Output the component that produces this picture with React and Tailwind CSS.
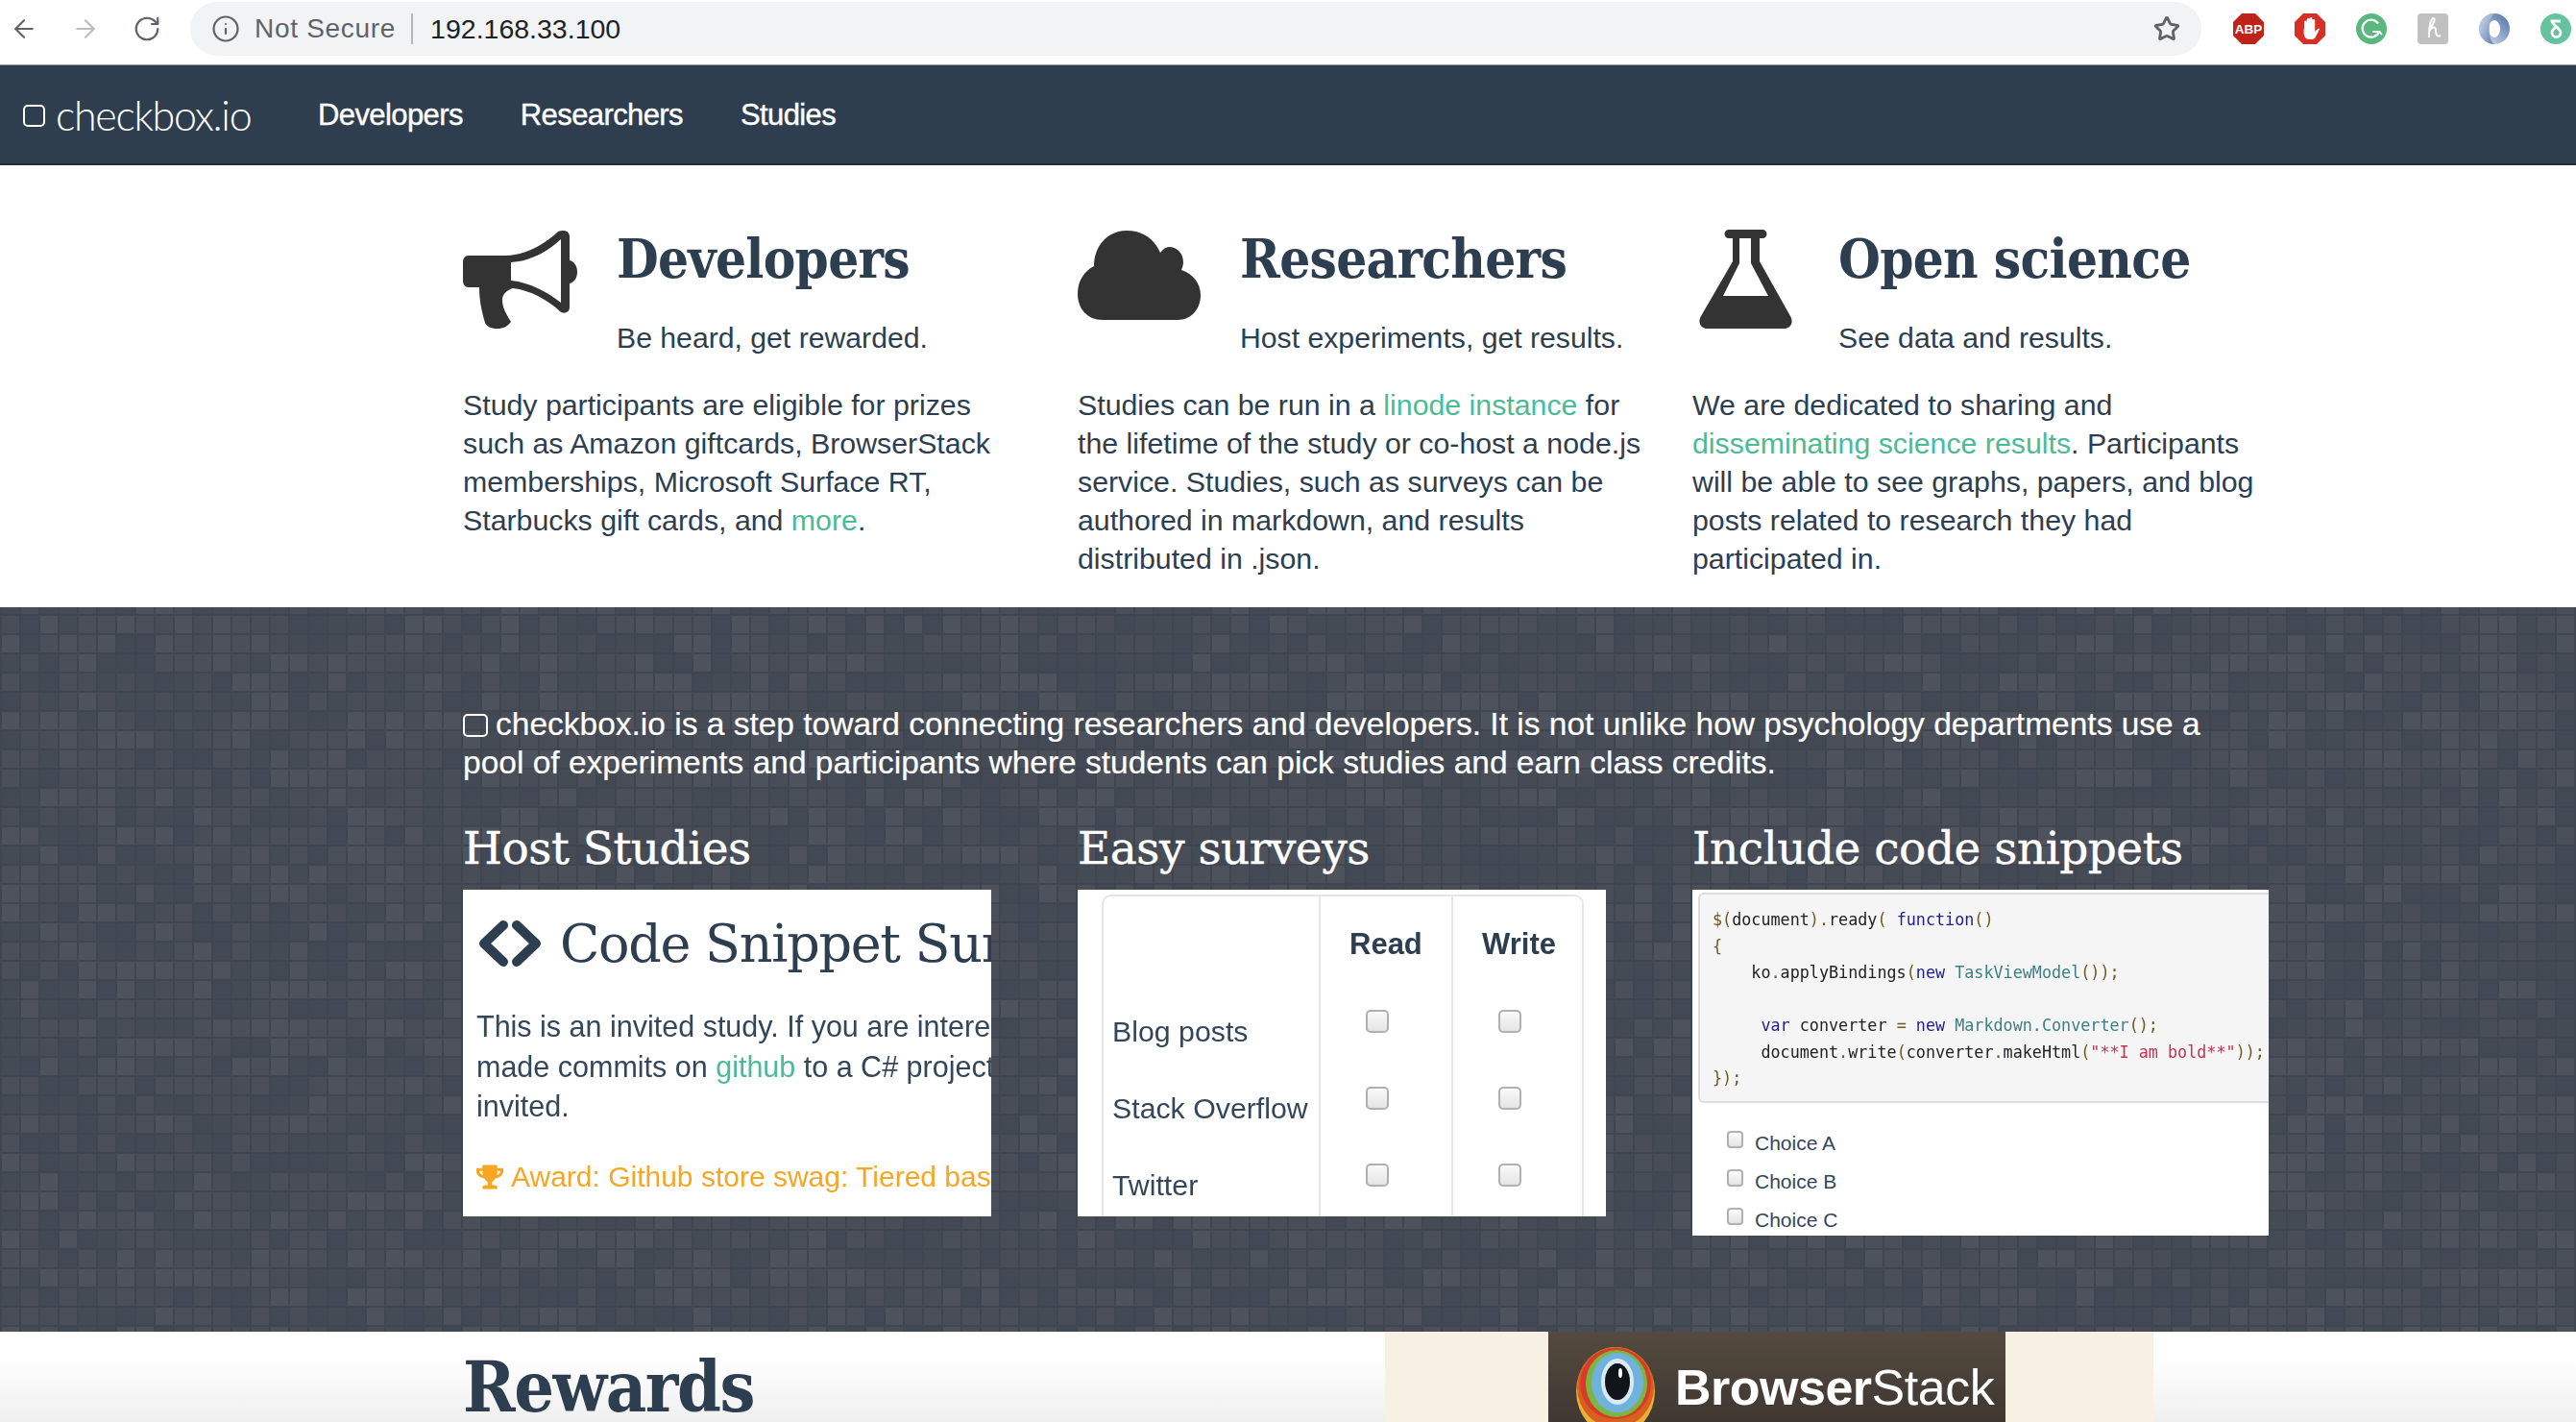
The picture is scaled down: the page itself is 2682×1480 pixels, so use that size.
import { ArrowLeft, ArrowRight, RotateCw, Info, Star } from 'lucide-react';
import { FaTrophy } from 'react-icons/fa';

const sans = "font-['Liberation_Sans',Arial,sans-serif]";
const slab = "font-['DejaVu_Serif',serif]";
const slabNarrow = "font-['DejaVu_Serif_Condensed','DejaVu_Serif',serif]";

// pseudo random tiles for the dark panel
const tiles = [];
let seed = 7;
const shades = ['#454b55', '#484d57', '#4a4f59', '#4d525c', '#434954'];
for (let y = 0; y < 40; y++) {
  for (let x = 0; x < 135; x++) {
    seed = (seed * 1103515245 + 12345) % 2147483648;
    tiles.push({ x: x * 20 + 2, y: y * 20 - 11, fill: shades[(seed >> 16) % 5] });
  }
}

function Texture() {
  return (
    <svg className="absolute inset-0 w-full h-full" aria-hidden="true">
      <rect width="100%" height="100%" fill="#404650" />
      {tiles.map((t, i) => (
        <rect key={i} x={t.x} y={t.y} width="18" height="18" fill={t.fill} />
      ))}
    </svg>
  );
}

function Megaphone() {
  return (
    <svg width="120" height="102" viewBox="0 0 120 102" fill="#333">
      <path
        fillRule="evenodd"
        d="M6 26H44C65 26 85 14 98 2C101 -1 111 -1 111 6V31C116 32 119 37 119 43C119 49 116 54 111 55V80C111 86 104 87 101 84C88 72 70 62 52 60C46 62 41 66 41 72C41 78 43 84 50 95C46 100 42 102 36 102C30 102 25 100 23 96C19 82 17 72 17 59H6C2 59 0 56 0 52V33C0 29 2 26 6 26ZM50 33V52C70 54 88 64 102 75V9C88 22 70 32 50 33Z"
      />
    </svg>
  );
}

function Cloud() {
  return (
    <svg width="128" height="93" viewBox="0 0 128 93" fill="#333">
      <path d="M26 93C10 93 0 81 0 66C0 52 7 42 17 37C17 15 32 0 51 0C68 0 80 9 86 23C89 19 92 17 95 17C104 17 110 24 110 33C110 36 109 38 108 41C120 45 128 55 128 67C128 82 118 93 104 93Z" />
    </svg>
  );
}

function Flask() {
  return (
    <svg width="97" height="103" viewBox="0 0 97 103" fill="#333">
      <path
        fillRule="evenodd"
        d="M31 0H66A4.5 4.5 0 0 1 66 9H63V33L95 90C99 97 95 103 88 103H9C2 103 -2 97 2 90L35 33V9H31A4.5 4.5 0 0 1 31 0ZM42 9V35L25 69H72L54 35V9Z"
      />
    </svg>
  );
}

function Extensions() {
  return (
    <div className="flex items-center gap-[32px] pl-[33px]">
      <svg width="32" height="32" viewBox="0 0 32 32">
        <polygon points="9,0 23,0 32,9 32,23 23,32 9,32 0,23 0,9" fill="#bd2318" />
        <text x="16" y="21" textAnchor="middle" fontSize="13.5" fontWeight="700" fill="#fff" fontFamily="Liberation Sans">ABP</text>
      </svg>
      <svg width="32" height="32" viewBox="0 0 32 32">
        <polygon points="9,0 23,0 32,9 32,23 23,32 9,32 0,23 0,9" fill="#d63024" />
        <path d="M10 15V9a1.4 1.4 0 0 1 2.8 0V6.5a1.4 1.4 0 0 1 2.8 0V5.500a1.400 1.400 0 0 1 2.800 0V7.500a1.400 1.400 0 0 1 2.800 0V19c2-2 3-3.500 4-3.500 1 .5.600 1.500 0 2.500-1.500 3-3 6-4 7.500-1 1-3 1.500-5 1.500-3.500 0-5.200-1-6-3.500-.8-2.500-.8-5.500 -.2-9z" fill="#fff" />
      </svg>
      <svg width="32" height="32" viewBox="0 0 32 32">
        <circle cx="16" cy="16" r="16" fill="#5ab77f" />
        <path d="M23 10.500A9 9 0 1 0 24 19H17" fill="none" stroke="#fff" strokeWidth="2.200" />
        <path d="M24 19l-2.500 4M24 19l3 3" fill="none" stroke="#fff" strokeWidth="1.800" />
      </svg>
      <div className="w-[32px] h-[32px] rounded-[4px] bg-[#c0c0c0] flex items-center justify-center">
        <svg width="20" height="26" viewBox="0 0 20 26" fill="none" stroke="#fff" strokeWidth="2">
          <path d="M6 22C6 14 6 8 9 3C10 1 13 2 11 6C9 10 7 13 6 16C8 11 13 10 13 14C13 17 13 22 18 20" />
        </svg>
      </div>
      <svg width="32" height="32" viewBox="0 0 32 32">
        <defs>
          <linearGradient id="ring" x1="0" y1="0" x2="1" y2="1">
            <stop offset="0" stopColor="#d5dff0" />
            <stop offset="1" stopColor="#5d7fb0" />
          </linearGradient>
          <linearGradient id="ring2" x1="1" y1="0" x2="0" y2="1">
            <stop offset="0" stopColor="#4a6fa8" />
            <stop offset="1" stopColor="#dfe6f2" />
          </linearGradient>
        </defs>
        <ellipse cx="16" cy="16" rx="16" ry="16" fill="url(#ring2)" />
        <ellipse cx="16" cy="16" rx="6" ry="9" fill="#fff" />
        <path d="M16 0A16 16 0 0 0 16 32C9 28 9 5 16 0Z" fill="url(#ring)" />
      </svg>
      <svg width="32" height="32" viewBox="0 0 32 32">
        <circle cx="16" cy="16" r="16" fill="#66c2a1" />
        <path d="M21 8H12C12 12 21 15 21 20A4.500 4.500 0 0 1 12 20C12 17 15 15 17 14" fill="none" stroke="#fff" strokeWidth="2.800" />
      </svg>
    </div>
  );
}

function BrowserBar() {
  return (
    <div className="h-[67px] bg-white flex items-start">
      <div className="w-[198px] h-[60px] flex items-center gap-[34px] pl-[10px] text-[#5f6368] shrink-0">
        <ArrowLeft size={30} strokeWidth={1.75} />
        <ArrowRight size={30} strokeWidth={1.75} className="text-[#bdbdbd]" />
        <RotateCw size={30} strokeWidth={1.75} />
      </div>
      <div className="mt-[2px] w-[2094px] h-[56px] rounded-full bg-[#f1f3f4] flex items-center pl-[22px] pr-[22px] shrink-0">
        <Info size={30} strokeWidth={1.75} className="text-[#5f6368]" />
        <span className={`${sans} ml-[15px] text-[28px] tracking-[0.7px] text-[#5f6368]`}>Not Secure</span>
        <span className="ml-[16px] w-[2px] h-[32px] bg-[#b5b7ba]" />
        <span className={`${sans} ml-[18px] text-[28.500px] text-[#202124]`}>192.168.33.100</span>
        <Star size={28} strokeWidth={2.5} className="ml-auto text-[#5f6368]" />
      </div>
      <div className="mt-[14px]"><Extensions /></div>
    </div>
  );
}

function NavBar() {
  const link = `${sans} text-[31px] tracking-[-0.6px] [-webkit-text-stroke:0.4px_white]`;
  return (
    <div className="h-[105px] pt-[2px] bg-[#2e3e4f] border-t border-[#9aa3ad] border-b-2 border-b-[#232f3c] flex items-center text-white">
      <span className="ml-[24px] w-[23px] h-[23px] rounded-[5px] border-2 border-white" />
      <span className="ml-[11px] font-['Lato',sans-serif] font-light text-[43px] tracking-[-1.3px] w-[273px]">checkbox.io</span>
      <a className={`${link} mr-[60px]`}>Developers</a>
      <a className={`${link} mr-[60px]`}>Researchers</a>
      <a className={link}>Studies</a>
    </div>
  );
}

function Feature({ icon, iconWidth, title, sub, children }) {
  return (
    <div className="w-[640px] shrink-0">
      <div className="flex items-start">
        <div className={iconWidth}>{icon}</div>
        <div>
          <h2 className={`${slabNarrow} h-[60px] leading-[60px] text-[56px] font-bold tracking-[-0.7px] text-[#2c3e50] whitespace-nowrap`}>{title}</h2>
          <p className="mt-[33px] h-[40px] leading-[40px] text-[30.200px] whitespace-nowrap">{sub}</p>
        </div>
      </div>
      <p className="mt-[30px] leading-[40px] text-[30.300px] whitespace-nowrap">{children}</p>
    </div>
  );
}

function Features() {
  return (
    <section className={`${sans} bg-white text-[#2c3e50] pt-[67px] pb-[30px] pl-[482px] flex`}>
      <Feature
        icon={<Megaphone />}
        iconWidth="w-[160px] pt-px"
        title="Developers"
        sub="Be heard, get rewarded."
      >
        Study participants are eligible for prizes<br />
        such as Amazon giftcards, BrowserStack<br />
        memberships, Microsoft Surface RT,<br />
        Starbucks gift cards, and <a className="text-[#4dba96]">more</a>.
      </Feature>
      <Feature
        icon={<Cloud />}
        iconWidth="w-[169px] pt-px"
        title="Researchers"
        sub="Host experiments, get results."
      >
        Studies can be run in a <a className="text-[#4dba96]">linode instance</a> for<br />
        the lifetime of the study or co-host a node.js<br />
        service. Studies, such as surveys can be<br />
        authored in markdown, and results<br />
        distributed in .json.
      </Feature>
      <Feature
        icon={<Flask />}
        iconWidth="w-[152px] pl-[7px]"
        title="Open science"
        sub="See data and results."
      >
        We are dedicated to sharing and<br />
        <a className="text-[#4dba96]">disseminating science results</a>. Participants<br />
        will be able to see graphs, papers, and blog<br />
        posts related to research they had<br />
        participated in.
      </Feature>
    </section>
  );
}

function StudyCard() {
  return (
    <div className={`${sans} w-[550px] h-[340px] bg-white overflow-hidden text-[#34465a] pl-[14px] whitespace-nowrap`}>
      <div className="blur-[0.5px]">
        <div className="flex items-center h-[58px] mt-[27px]">
          <svg width="70" height="50" viewBox="0 0 70 50" fill="none" stroke="#2c3e50" strokeWidth="10" strokeLinecap="round" strokeLinejoin="round" className="shrink-0">
            <polyline points="28,6 8,25 28,44" />
            <polyline points="42,6 62,25 42,44" />
          </svg>
          <span className={`${slab} ml-[17px] text-[54px] tracking-[-1.3px] text-[#2c3e50]`}>Code Snippet Sur</span>
        </div>
        <p className="mt-[37px] text-[30.500px] leading-[41.500px]">
          This is an invited study. If you are interested<br />
          made commits on <a className="text-[#4dba96]">github</a> to a C# project<br />
          invited.
        </p>
        <p className="mt-[32px] flex items-center text-[30px] leading-[40px] text-[#f5a623]">
          <FaTrophy size={28} className="shrink-0" />
          <span className="ml-[8px]">Award: Github store swag: Tiered base</span>
        </p>
      </div>
    </div>
  );
}

function Box() {
  return <span className="block w-[24px] h-[24px] rounded-[5px] border-2 border-[#b0b0b0] bg-gradient-to-b from-[#fafafa] to-[#e4e4e4]" />;
}

function SurveyCard() {
  const rows = ['Blog posts', 'Stack Overflow', 'Twitter'];
  return (
    <div className={`${sans} w-[550px] h-[340px] bg-white overflow-hidden pl-[25px] pt-[5px] text-[#34465a]`}>
      <div className="w-[502px] h-[400px] border-2 border-[#e6e6e6] rounded-[10px] blur-[0.4px]">
        <div className="grid grid-cols-[226px_138px_134px] h-full">
          <div className="border-r-2 border-[#e6e6e6] pl-[9px] pt-[121px]">
            {rows.map((r) => (
              <div key={r} className="h-[80px] text-[30.300px] leading-[40px] whitespace-nowrap">{r}</div>
            ))}
          </div>
          {['Read', 'Write'].map((h, i) => (
            <div key={h} className={i === 0 ? 'border-r-2 border-[#e6e6e6] pl-[47px]' : 'pl-[47px]'}>
              <div className="text-[31px] font-bold leading-[40px] pt-[30px] -ml-[17px] text-[#2c3e50]">{h}</div>
              <div className="mt-[48px] flex flex-col gap-[56px]">
                <Box />
                <Box />
                <Box />
              </div>
            </div>
          ))}
        </div>
      </div>
    </div>
  );
}

function Mark({ color, children }) {
  return <span className={color}>{children}</span>;
}

function SnippetCard() {
  const pun = 'text-[#6d5a20]';
  const kw = 'text-[#1d1d8f]';
  const typ = 'text-[#3c7f86]';
  const str = 'text-[#c8304f]';
  return (
    <div className={`${sans} w-[600px] h-[360px] bg-white overflow-hidden pl-[6px] pt-[3px] text-[#34465a]`}>
      <pre className="w-[620px] h-[219px] bg-[#f5f5f5] border-2 border-[#dddddd] rounded-[6px] pl-[13px] pt-[13px] font-['DejaVu_Sans_Mono',monospace] text-[16.750px] leading-[27.500px] text-[#222] blur-[0.3px]">
        <Mark color={pun}>$(</Mark>document<Mark color={pun}>).</Mark>ready<Mark color={pun}>( </Mark><Mark color={kw}>function</Mark><Mark color={pun}>()</Mark>{'\n'}
        <Mark color={pun}>{'{'}</Mark>{'\n'}
        {'    '}ko<Mark color={pun}>.</Mark>applyBindings<Mark color={pun}>(</Mark><Mark color={kw}>new</Mark> <Mark color={typ}>TaskViewModel</Mark><Mark color={pun}>());</Mark>{'\n'}
        {'\n'}
        {'     '}<Mark color={kw}>var</Mark> converter <Mark color={pun}>=</Mark> <Mark color={kw}>new</Mark> <Mark color={typ}>Markdown.Converter</Mark><Mark color={pun}>();</Mark>{'\n'}
        {'     '}document<Mark color={pun}>.</Mark>write<Mark color={pun}>(</Mark>converter<Mark color={pun}>.</Mark>makeHtml<Mark color={pun}>(</Mark><Mark color={str}>"**I am bold**"</Mark><Mark color={pun}>));</Mark>{'\n'}
        <Mark color={pun}>{'});'}</Mark>
      </pre>
      <div className="pl-[30px] mt-[28px] flex flex-col gap-[12px] text-[21px] leading-[28px]">
        {['Choice A', 'Choice B', 'Choice C'].map((c) => (
          <div key={c} className="flex items-start">
            <span className="block mt-px w-[17px] h-[18px] rounded-[4px] border-2 border-[#b0b0b0] bg-gradient-to-b from-[#fafafa] to-[#e4e4e4]" />
            <span className="ml-[12px]">{c}</span>
          </div>
        ))}
      </div>
    </div>
  );
}

function DarkPanel() {
  const cols = [
    { title: 'Host Studies', card: <StudyCard /> },
    { title: 'Easy surveys', card: <SurveyCard /> },
    { title: 'Include code snippets', card: <SnippetCard /> },
  ];
  return (
    <section className={`${sans} relative bg-[#484d57] text-white pt-[102px] pb-[100px] pl-[482px] overflow-hidden`}>
      <Texture />
      <div className="relative">
        <p className="text-[33.500px] leading-[40px] whitespace-nowrap [-webkit-text-stroke:0.2px_white]">
          <span className="inline-block align-[-2px] w-[26px] h-[24px] rounded-[5px] border-2 border-white mr-[8px]" />
          checkbox.io is a step toward connecting researchers and developers. It is not unlike how psychology departments use a<br />
          pool of experiments and participants where students can pick studies and earn class credits.
        </p>
        <div className="flex mt-[39px]">
          {cols.map((c) => (
            <div key={c.title} className="w-[640px] shrink-0">
              <h3 className={`${slab} text-[47px] leading-[60px] tracking-[-0.5px] [-webkit-text-stroke:0.4px_white] whitespace-nowrap`}>{c.title}</h3>
              <div className="mt-[13px]">{c.card}</div>
            </div>
          ))}
        </div>
      </div>
    </section>
  );
}

function Rewards() {
  return (
    <section className="h-[94px] overflow-hidden bg-gradient-to-b from-white from-30% to-[#efefef] flex pl-[482px]">
      <h2 className={`${slabNarrow} pt-[12px] text-[73px] font-bold leading-[90px] tracking-[-1.400px] text-[#2c3e50] w-[960px] shrink-0`}>Rewards</h2>
      <div className="w-[800px] h-[94px] bg-[#f6f1e3] pl-[170px] shrink-0">
        <div className="w-[476px] h-[94px] bg-gradient-to-b from-[#544a3f] to-[#3f3831] flex items-start pl-[29px]">
          <svg width="82" height="94" viewBox="0 0 82 94" className="shrink-0 mt-[16px]">
            <ellipse cx="41" cy="46" rx="41" ry="46" fill="#eab03a" />
            <ellipse cx="41" cy="42" rx="40" ry="42" fill="#d8601f" />
            <ellipse cx="41" cy="38" rx="37" ry="37" fill="#d73b2a" />
            <ellipse cx="42" cy="38" rx="32" ry="35" fill="#7db544" />
            <ellipse cx="43" cy="37" rx="27" ry="31" fill="#6fb2dc" />
            <ellipse cx="43" cy="36" rx="17" ry="24" fill="#dbeaf2" />
            <ellipse cx="43" cy="36" rx="13" ry="19" fill="#10151a" />
            <ellipse cx="46" cy="27" rx="2" ry="5" fill="#fff" />
          </svg>
          <span className={`${sans} ml-[21px] mt-[28px] text-[52px] leading-[60px] text-white tracking-[-0.5px] whitespace-nowrap`}>
            <span className="font-bold">Browser</span>Stack
          </span>
        </div>
      </div>
    </section>
  );
}

export default function App() {
  return (
    <div className="w-[2682px] h-[1480px] overflow-hidden bg-white">
      <BrowserBar />
      <NavBar />
      <Features />
      <DarkPanel />
      <Rewards />
    </div>
  );
}
